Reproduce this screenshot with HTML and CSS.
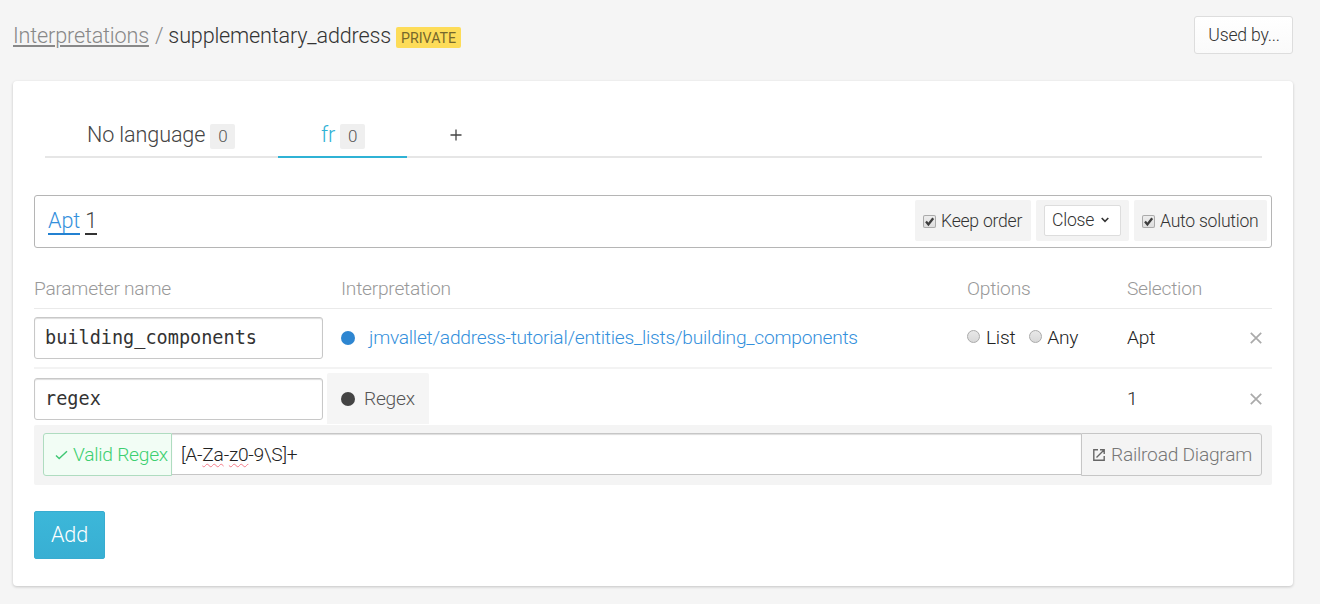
FILE: index.html
```html
<!DOCTYPE html>
<html lang="en">
<head>
<meta charset="utf-8">
<title>Interpretations / supplementary_address</title>
<link rel="stylesheet" href="styles.css">
</head>
<body>
<header class="header">
  <h1 class="crumbs"><a class="crumb-link" href="#">Interpretations</a><span class="slash">/</span><span class="crumb-name">supplementary_address</span><span class="tag">PRIVATE</span></h1>
  <button class="used-by">Used by...</button>
</header>
<main class="card">
  <nav class="tabs">
    <a class="tab tab-none"><span>No language</span><span class="count">0</span></a>
    <a class="tab tab-active"><span>fr</span><span class="count">0</span></a>
    <a class="tab tab-add" aria-label="Add language"><svg width="12" height="12" viewBox="0 0 12 12"><path d="M6 .5v11M.5 6h11" fill="none" stroke="#444" stroke-width="1.3"/></svg></a>
  </nav>
  <section class="expression">
    <div class="sentence"><span class="entity">Apt</span><span class="entity entity-dark">1</span></div>
    <label class="option keep"><span class="check"><svg width="13" height="13" viewBox="0 0 13 13"><path d="M3 6.6l2.4 2.8L10.2 3.2" fill="none" stroke="#3d3d3d" stroke-width="2.3"/></svg></span><span>Keep order</span></label>
    <div class="option select-wrap"><div class="select"><span>Close</span><svg width="8" height="6" viewBox="0 0 8 6"><path d="M.7 1L4 4.3 7.3 1" fill="none" stroke="#333" stroke-width="1.6"/></svg></div></div>
    <label class="option auto"><span class="check"><svg width="13" height="13" viewBox="0 0 13 13"><path d="M3 6.6l2.4 2.8L10.2 3.2" fill="none" stroke="#3d3d3d" stroke-width="2.3"/></svg></span><span>Auto solution</span></label>
  </section>
  <section class="params">
    <div class="row head"><span>Parameter name</span><span class="c-interp">Interpretation</span><span>Options</span><span>Selection</span></div>
    <div class="row first">
      <div class="input">building_components</div>
      <div class="c-interp"><i class="dot"></i><a class="path">jmvallet/address-tutorial/entities_lists/building_components</a></div>
      <div class="radios"><i class="radio"></i><span class="list">List</span><i class="radio"></i><span>Any</span></div>
      <div>Apt</div>
      <svg class="close" width="12" height="12" viewBox="0 0 12 12"><path d="M.8.8l10.4 10.4M11.2.8L.8 11.2" fill="none" stroke="#aaa" stroke-width="1.7"/></svg>
    </div>
    <div class="row second">
      <div class="input">regex</div>
      <div class="c-regex"><i class="dot dot-dark"></i><span>Regex</span></div>
      <div></div>
      <div>1</div>
      <svg class="close" width="12" height="12" viewBox="0 0 12 12"><path d="M.8.8l10.4 10.4M11.2.8L.8 11.2" fill="none" stroke="#aaa" stroke-width="1.7"/></svg>
    </div>
    <div class="regex-bar">
      <div class="valid"><svg width="13" height="10" viewBox="0 0 13 10"><path d="M1 5.4l3.2 3.2L12 1.2" fill="none" stroke="#3fc773" stroke-width="1.4"/></svg><span>Valid Regex</span></div>
      <div class="regex-value">[A-<span class="spell">Za</span>-<span class="spell">z0</span>-9\S]+</div>
      <a class="railroad"><svg width="12" height="12" viewBox="0 0 12 12"><path d="M5 .8H.8v10.4h10.4V7M7 .8h4.2V5M11 1L3.5 8.5" fill="none" stroke="#666" stroke-width="1.4"/></svg><span>Railroad Diagram</span></a>
    </div>
  </section>
  <button class="add">Add</button>
</main>
</body>
</html>
```

FILE: styles.css
```css
* { box-sizing: border-box; }
body {
  margin: 0;
  height: 604px;
  overflow: hidden;
  background: #f5f5f5;
  color: #333;
  font: 300 19.2px/24px Roboto, sans-serif;
  letter-spacing: -.25px;
}
button { font-family: inherit; font-weight: 300; letter-spacing: -.2px; }

.header {
  display: flex;
  justify-content: space-between;
  align-items: flex-start;
  height: 81px;
  padding: 16px 27px 0 13px;
}
.crumbs {
  display: flex;
  margin: 7px 0 0;
  font-size: 21.6px;
  font-weight: 300;
  line-height: 26px;
  letter-spacing: -.17px;
}
.crumb-link { color: #888; text-decoration: underline; }
.slash { margin: 0 5px 0 6px; color: #888; }
.tag {
  height: 21px;
  margin: 4px 0 0 5px;
  padding: 0 5px;
  border-radius: 2px;
  background: #fddc58;
  color: #76672c;
  font-size: 14.2px;
  font-weight: 400;
  line-height: 22px;
  letter-spacing: 0;
}
.used-by {
  width: 99px;
  height: 38px;
  padding: 0 0 0 1px;
  border: 1px solid #ddd;
  border-radius: 3px;
  background: linear-gradient(#fff, #fafafa);
  color: #333;
  font-size: 17.6px;
}

.card {
  display: flex;
  flex-direction: column;
  align-items: flex-start;
  width: 1280px;
  height: 505px;
  margin-left: 13px;
  padding: 32px 21px 0;
  border-radius: 4px;
  background: #fff;
  box-shadow: 0 1px 3px rgba(0, 0, 0, .2);
}
.tabs {
  display: flex;
  width: 1217px;
  height: 45px;
  margin-left: 11px;
  border-bottom: 2px solid #e6e6e6;
  font-size: 21.6px;
}
.tab {
  display: flex;
  align-items: flex-start;
  height: 45px;
  padding-top: 10px;
  letter-spacing: -.12px;
}
.tab-none { width: 233px; padding-left: 42px; color: #444; }
.tab-active {
  width: 129px;
  padding-left: 43px;
  border-bottom: 2px solid #2fb2d5;
  color: #2fb2d5;
}
.tab-add { padding: 16px 0 0 43px; }
.count {
  width: 25px;
  height: 25px;
  margin: 1px 0 0 5px;
  border-radius: 2px;
  background: #efefef;
  color: #555;
  font-size: 17px;
  line-height: 25px;
  text-align: center;
}

.expression {
  display: flex;
  width: 1238px;
  height: 53px;
  margin-top: 37px;
  padding: 4px 4px 0 13px;
  border: 1px solid #b5b5b5;
  border-radius: 3px;
}
.sentence { display: flex; gap: 5px; flex: 1; font-size: 21.6px; letter-spacing: -.1px; }
.entity {
  height: 35px;
  padding-top: 9px;
  border-bottom: 2px solid #2381d1;
  color: #3490dc;
}
.entity-dark { border-color: #333; color: #444; }
.option {
  display: flex;
  align-items: center;
  height: 41px;
  border-radius: 2px;
  background: #f3f3f3;
  font-size: 17.6px;
}
.keep { width: 116px; padding-left: 8px; gap: 5px; }
.select-wrap { width: 93px; margin: 0 5px; padding-left: 8px; }
.auto { width: 133px; padding-left: 8px; gap: 5px; }
.check {
  display: flex;
  width: 13px;
  height: 13px;
  margin-top: 1px;
  border-radius: 2px;
  background: linear-gradient(#eee, #ddd);
  box-shadow: inset 0 0 0 1px #aaa;
}
.select {
  display: flex;
  align-items: center;
  justify-content: space-between;
  width: 77px;
  height: 31px;
  padding: 0 11px 2px 7px;
  border: 1px solid #ddd;
  border-radius: 2px;
  background: #fff;
}

.params { width: 1238px; }
.row {
  display: grid;
  grid-template-columns: 293px 640px 160px 123px 12px;
  align-items: center;
}
.head {
  height: 61px;
  padding-top: 21px;
  border-bottom: 1px solid #eaeaea;
  color: #999;
}
.c-interp { display: flex; align-items: center; padding-left: 14px; }
.first {
  height: 60px;
  padding-bottom: 1px;
  border-bottom: 2px solid #f3f3f3;
  color: #222;
}
.second { height: 56px; padding-top: 3px; color: #222; }
.input {
  width: 289px;
  height: 42px;
  margin-top: 1px;
  padding-left: 10px;
  border: 1px solid #c8c8c8;
  border-radius: 3px;
  box-shadow: inset 0 1px 1px #ddd;
  color: #333;
  font: 18.55px/40px "DejaVu Sans Mono", monospace;
  letter-spacing: 0;
}
.dot {
  width: 14px;
  height: 14px;
  margin-right: 14px;
  border-radius: 50%;
  background: #2e86d1;
}
.path { color: #3490dc; }
.c-regex {
  display: flex;
  align-items: center;
  width: 102px;
  height: 51px;
  padding-left: 14px;
  border-radius: 2px 2px 0 0;
  background: #f5f5f5;
  color: #555;
}
.dot-dark { margin-right: 9px; background: #444; }
.radios { display: flex; align-items: center; }
.radio {
  width: 13px;
  height: 13px;
  margin: -2px 6px 0 0;
  border: 1px solid #aaa;
  border-radius: 50%;
  background: linear-gradient(#e8e8e8, #d8d8d8);
}
.list { margin-right: 14px; }
.list + .radio { margin-right: 5px; }
.regex-bar {
  display: flex;
  height: 60px;
  padding: 8px 10px 0 9px;
  border-radius: 2px;
  background: #f4f4f4;
}
.valid {
  display: flex;
  align-items: center;
  width: 129px;
  height: 43px;
  padding-left: 11px;
  gap: 5px;
  border: 1px solid #afdcc0;
  border-radius: 3px 0 0 3px;
  background: #f2fdf5;
  color: #3ccf70;
  white-space: nowrap;
}
.regex-value {
  flex: 1;
  height: 42px;
  padding-left: 9px;
  border: solid #c6c6c6;
  border-width: 1px 0;
  box-shadow: inset 0 1px 1px #ddd;
  background: #fff;
  color: #222;
  line-height: 41px;
}
.spell { text-decoration: underline wavy #f47c8b 1px; text-underline-offset: 2px; }
.railroad {
  display: flex;
  align-items: center;
  width: 181px;
  height: 43px;
  padding-left: 11px;
  gap: 6px;
  border: 1px solid #c6c6c6;
  border-radius: 0 3px 3px 0;
  color: #777;
  white-space: nowrap;
}
.add {
  width: 71px;
  height: 48px;
  margin-top: 26px;
  padding: 0 0 1px;
  border: 1px solid #38acd0;
  border-radius: 2px;
  background: linear-gradient(#3cb7d9, #38afd3);
  color: #fff;
  font-size: 21.6px;
}
```
